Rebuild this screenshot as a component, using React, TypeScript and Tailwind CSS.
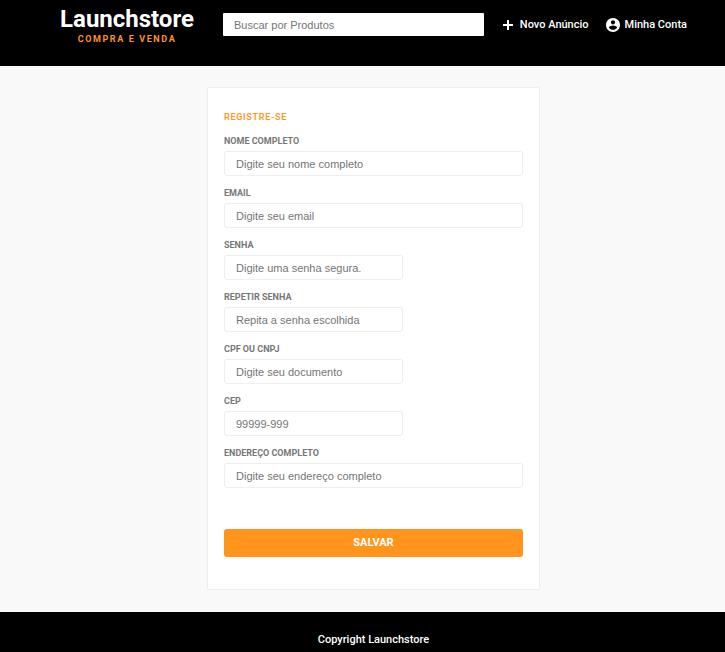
type Field = {
  id: string;
  label: string;
  placeholder: string;
  type?: string;
  short?: boolean;
};

const fields: Field[] = [
  { id: "name", label: "Nome completo", placeholder: "Digite seu nome completo" },
  { id: "email", label: "Email", placeholder: "Digite seu email", type: "email" },
  { id: "password", label: "Senha", placeholder: "Digite uma senha segura.", type: "password", short: true },
  { id: "passwordRepeat", label: "Repetir senha", placeholder: "Repita a senha escolhida", type: "password", short: true },
  { id: "document", label: "CPF ou CNPJ", placeholder: "Digite seu documento", short: true },
  { id: "cep", label: "CEP", placeholder: "99999-999", short: true },
  { id: "address", label: "Endereço completo", placeholder: "Digite seu endereço completo" },
];

function AddIcon() {
  return (
    <svg viewBox="0 0 16 16" className="size-4 fill-white" aria-hidden="true">
      <path d="M7 3h2v4h4v2H9v4H7V9H3V7h4z" />
    </svg>
  );
}

function AccountIcon() {
  return (
    <svg viewBox="0 0 24 24" className="size-4 fill-white" aria-hidden="true">
      <path d="M12 1.5C6.2 1.5 1.5 6.2 1.5 12S6.2 22.5 12 22.5 22.5 17.8 22.5 12 17.8 1.5 12 1.5zm0 3.3c1.8 0 3.2 1.4 3.2 3.2s-1.4 3.2-3.2 3.2S8.8 9.8 8.8 8 10.200 4.800 12 4.800zm0 14.400c-2.500 0-4.900-1.300-6.200-3.220.03-2.100 4.200-3.200 6.200-3.200 1.990 0 6.170 1.100 6.200 3.200-1.300 1.920-3.700 3.220-6.200 3.220z" />
    </svg>
  );
}

function Header() {
  return (
    <header className="h-[66px] bg-black pr-[38px] pl-[60px] text-white">
      <div className="flex items-start">
        <a href="#" className="flex w-[134px] flex-col items-center pt-[5px]">
          <span className="text-2xl leading-7 font-bold">Launchstore</span>
          <span className="text-[9px] leading-3 font-bold tracking-[1.6px] text-[#ff951d] uppercase">
            Compra e venda
          </span>
        </a>
        <input
          type="search"
          aria-label="Buscar por Produtos"
          placeholder="Buscar por Produtos"
          className="mt-[13px] ml-[29px] h-[23px] min-w-0 flex-1 rounded-[1px] bg-white px-[11px] font-['Liberation_Sans',Arial,sans-serif] text-[11px] text-black outline-none placeholder:text-[#757575]"
        />
        <nav className="mt-4 ml-4 flex h-[17px] items-center gap-4 text-[11px] leading-[17px] font-medium whitespace-nowrap">
          <a href="#" className="flex items-center gap-1">
            <AddIcon />
            Novo Anúncio
          </a>
          <a href="#" className="flex items-center gap-1">
            <AccountIcon />
            Minha Conta
          </a>
        </nav>
      </div>
    </header>
  );
}

export default function App() {
  return (
    <div className="min-h-screen bg-[#f9f9f9] font-[Roboto,sans-serif]">
      <Header />
      <main className="pt-[21px] pb-[22px] pl-[22px]">
        <form className="mx-auto w-[333px] max-w-full rounded-[2px] border border-[#eee] bg-white px-4 pt-[22px] pb-8">
          <h1 className="text-[9px] leading-[14px] font-semibold tracking-[0.7px] text-[#ff951d] uppercase">
            Registre-se
          </h1>
          <div className="mt-[10px] flex flex-col gap-[10px]">
            {fields.map((field) => (
              <div key={field.id} className="flex flex-col">
                <label
                  htmlFor={field.id}
                  className="mb-[3px] text-[9px] leading-[14px] font-bold text-[#777] uppercase"
                >
                  {field.label}
                </label>
                <input
                  id={field.id}
                  type={field.type ?? "text"}
                  placeholder={field.placeholder}
                  className={`h-[25px] rounded-[3px] border border-[#eee] bg-white px-[11px] font-['Liberation_Sans',Arial,sans-serif] text-[11px] text-[#333] outline-none placeholder:text-[#757575] ${
                    field.short ? "w-3/5" : "w-full"
                  }`}
                />
              </div>
            ))}
          </div>
          <button
            type="submit"
            className="mt-[41px] h-7 w-full rounded-[3px] bg-[#ff951d] pt-px text-[11px] font-bold text-white uppercase"
          >
            Salvar
          </button>
        </form>
      </main>
      <footer className="h-10 bg-black pt-5 pl-[22px] text-center text-[11px] leading-4 font-medium text-white">
        Copyright Launchstore
      </footer>
    </div>
  );
}
